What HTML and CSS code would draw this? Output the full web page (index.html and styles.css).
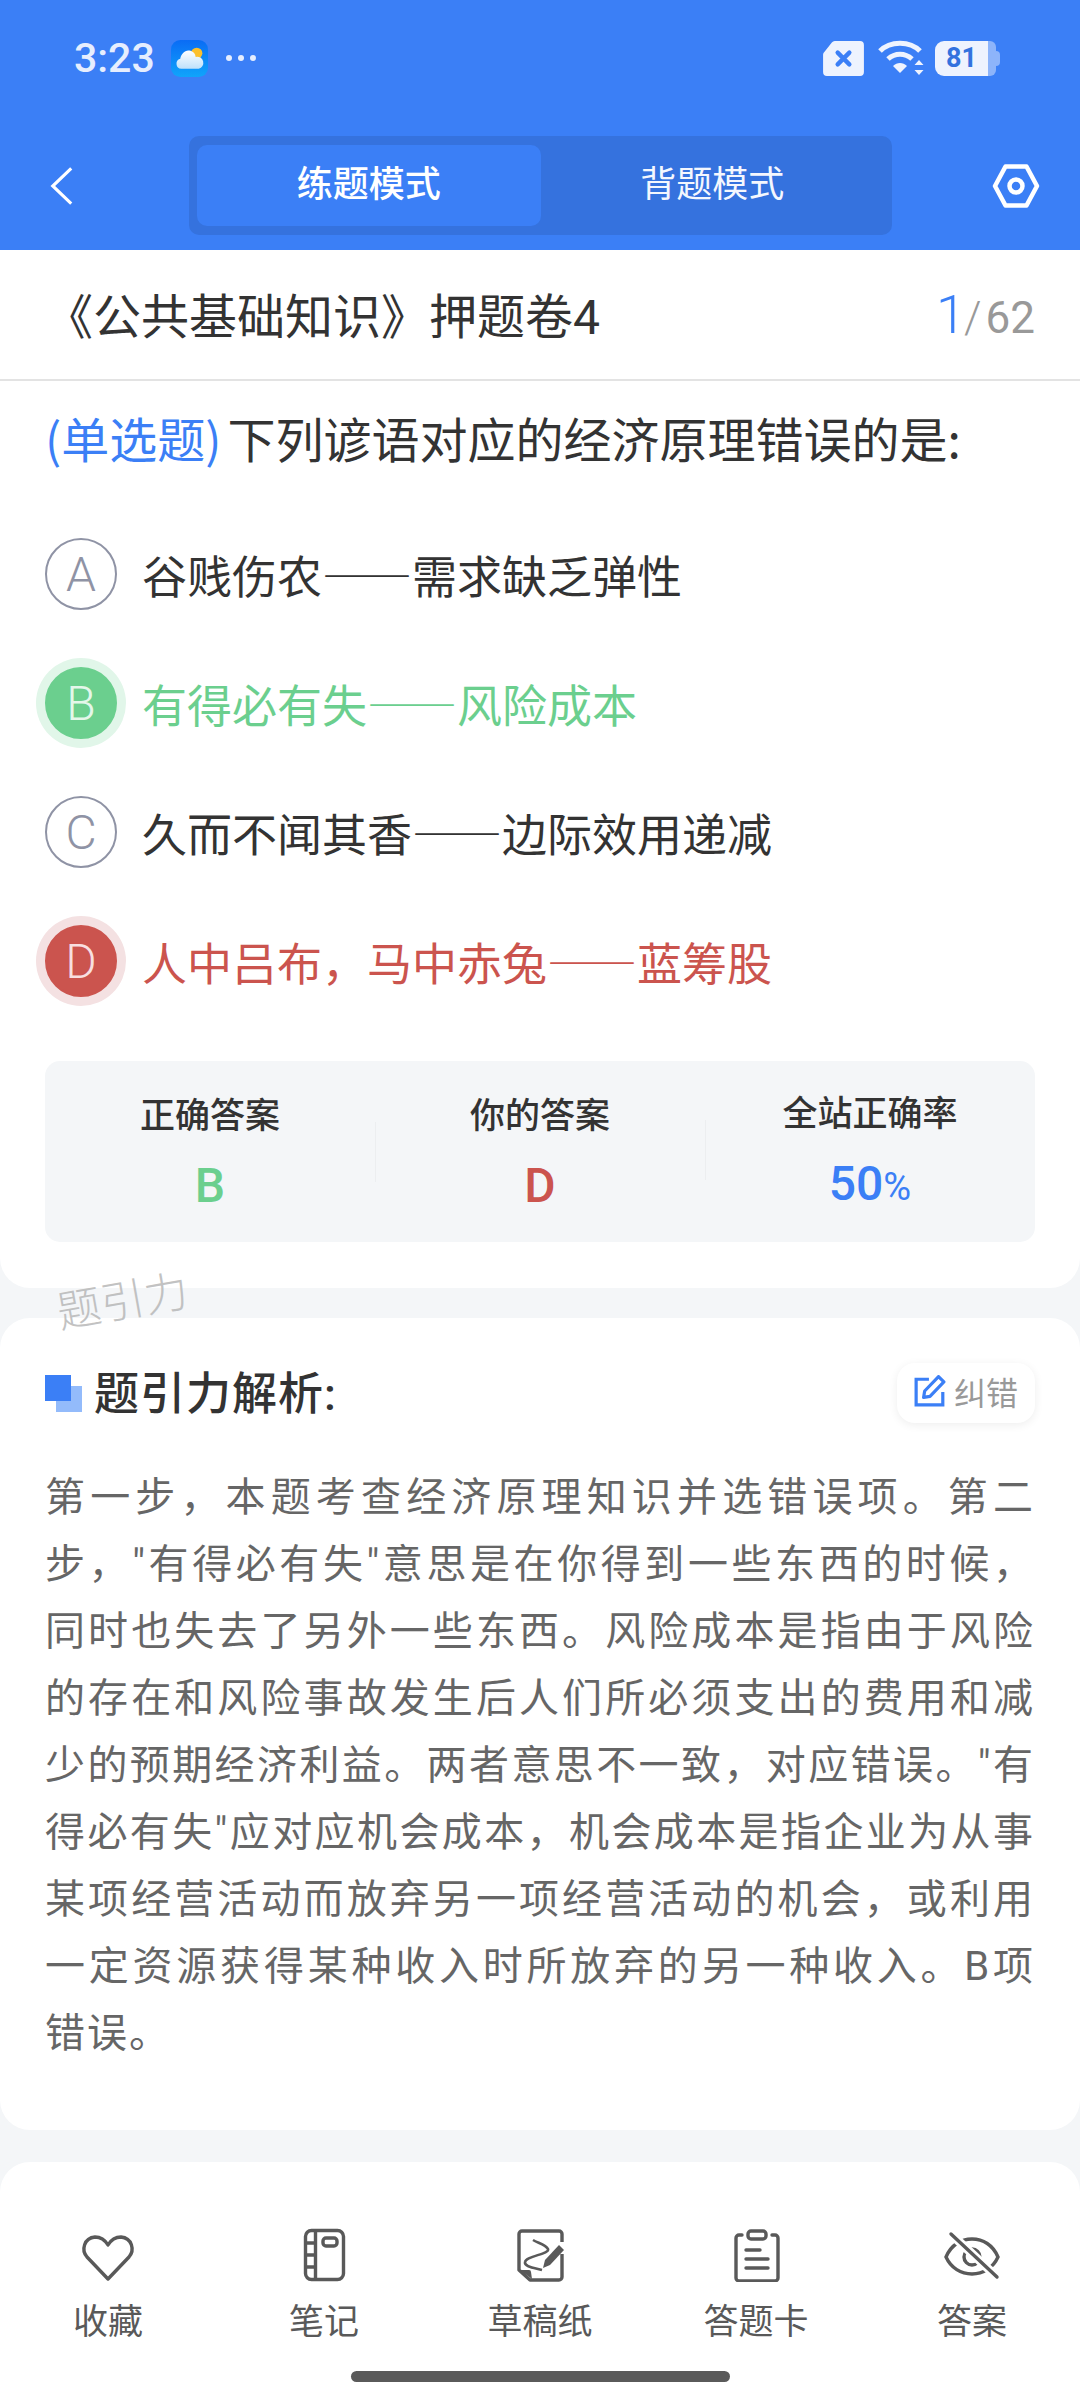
FILE: index.html
```html
<!DOCTYPE html>
<html lang="zh-CN">
<head>
  <meta charset="UTF-8" />
  <title>练题模式</title>
  <link rel="stylesheet" href="styles.css">
</head>
<body>
  <div class="app">
    <header class="top">
      <div class="status">
        <div class="status-left">
          <span class="time">3:23</span>
          <svg class="weather" viewBox="0 0 36 36"><defs><linearGradient id="wbg" x1="0" y1="0" x2="0" y2="1"><stop offset="0" stop-color="#0a6cf5"/><stop offset="1" stop-color="#10a4fb"/></linearGradient><linearGradient id="cl" x1="0" y1="0" x2="0" y2="1"><stop offset="0" stop-color="#fff"/><stop offset="1" stop-color="#bfe1fb"/></linearGradient></defs><rect width="36" height="36" rx="9" fill="url(#wbg)"/><circle cx="25" cy="13" r="5.5" fill="#fbc02d"/><path d="M10 28a5 5 0 0 1-1-9.8C10 13 14 9 19 10.500a7 7 0 0 1 5 6 5.500 5.500 0 0 1 3 11.500z" fill="url(#cl)"/></svg>
          <span class="dots"><i></i><i></i><i></i></span>
        </div>
        <div class="status-right">
          <svg class="sim" viewBox="0 0 42 36"><path d="M12 0h26a4 4 0 0 1 4 4v28a4 4 0 0 1-4 4H4a4 4 0 0 1-4-4V14a4 4 0 0 1 1.500-3L9 1.500A4 4 0 0 1 12 0z" fill="#eef3fe"/><path d="M15 12l12 12M27 12L15 24" stroke="#3b7ff6" stroke-width="4.500" stroke-linecap="round"/></svg>
          <svg class="wifi" viewBox="0 0 46 36"><path d="M2 11C12 .5 32 .5 42 11" fill="none" stroke="#eef3fe" stroke-width="5"/><path d="M10 19c7-6.500 17-6.500 24 0" fill="none" stroke="#eef3fe" stroke-width="5"/><path d="M15 26c4-4 10-4 14 0l-7 7z" fill="#eef3fe"/><path d="M41 20l4.500 5h-9zM41 35l4.500-5h-9z" fill="#eef3fe"/></svg>
          <div class="battery"><span class="battery-level">81</span><span class="battery-rest"></span></div>
        </div>
      </div>
      <div class="nav">
        <svg class="back" viewBox="0 0 26 44"><path d="M23 3L3 22l20 19" fill="none" stroke="#fff" stroke-width="3.400"/></svg>
        <div class="tabs">
          <div class="tab active">练题模式</div>
          <div class="tab">背题模式</div>
        </div>
        <svg class="settings" viewBox="0 0 48 44"><path d="M13.500 2.500h21L45 22 34.500 41.500h-21L3 22z" fill="none" stroke="#fff" stroke-width="4.500" stroke-linejoin="round"/><circle cx="24" cy="22" r="6.500" fill="none" stroke="#fff" stroke-width="4.500"/></svg>
      </div>
    </header>

    <div class="paper">
      <div class="paper-title">《公共基础知识》押题卷4</div>
      <div class="paper-count"><span class="current">1</span><span class="slash">/</span><span>62</span></div>
    </div>

    <section class="card question">
      <p class="stem"><span class="kind">(单选题)</span>下列谚语对应的经济原理错误的是:</p>
      <ul class="options">
        <li class="option"><span class="letter">A</span><span>谷贱伤农——需求缺乏弹性</span></li>
        <li class="option right"><span class="letter">B</span><span>有得必有失——风险成本</span></li>
        <li class="option"><span class="letter">C</span><span>久而不闻其香——边际效用递减</span></li>
        <li class="option wrong"><span class="letter">D</span><span>人中吕布，马中赤兔——蓝筹股</span></li>
      </ul>
      <div class="stats">
        <div class="stat"><h4>正确答案</h4><p class="green">B</p></div>
        <div class="stat"><h4>你的答案</h4><p class="red">D</p></div>
        <div class="stat"><h4>全站正确率</h4><p class="blue">50<small>%</small></p></div>
      </div>
    </section>

    <div class="watermark">题引力</div>

    <section class="card analysis">
      <div class="analysis-head">
        <div class="analysis-title">
          <span class="squares"><i></i><i></i></span>
          <h3>题引力解析:</h3>
        </div>
        <div class="fix">
          <svg viewBox="0 0 30 30"><path d="M14 4H2v24h25V16" fill="none" stroke="#3b7ff6" stroke-width="3"/><path d="M23 1.500l5 5L15 20l-6 1 1-6z" fill="none" stroke="#3b7ff6" stroke-width="3" stroke-linejoin="round"/></svg>
          <span>纠错</span>
        </div>
      </div>
      <p class="analysis-text">第一步，本题考查经济原理知识并选错误项。第二步，"有得必有失"意思是在你得到一些东西的时候，同时也失去了另外一些东西。风险成本是指由于风险的存在和风险事故发生后人们所必须支出的费用和减少的预期经济利益。两者意思不一致，对应错误。"有得必有失"应对应机会成本，机会成本是指企业为从事某项经营活动而放弃另一项经营活动的机会，或利用一定资源获得某种收入时所放弃的另一种收入。B项错误。</p>
    </section>

    <nav class="bottom">
      <div class="action">
        <svg viewBox="0 0 56 56"><path d="M28 53L7 31C1 24 4 12 15 11c6 0 10 3 13 8 3-5 7-8 13-8 11 1 14 13 8 20z" fill="none" stroke="#595959" stroke-width="3.400" stroke-linejoin="round"/></svg>
        <span>收藏</span>
      </div>
      <div class="action">
        <svg viewBox="0 0 56 56"><rect x="9.500" y="4.500" width="38" height="49" rx="6" fill="none" stroke="#595959" stroke-width="3.400"/><path d="M19.500 4.500v49M9.500 17h10M9.500 29h10M9.500 41h10" fill="none" stroke="#595959" stroke-width="3.400"/><rect x="27" y="12" width="14" height="8" rx="3" fill="none" stroke="#595959" stroke-width="3.400"/></svg>
        <span>笔记</span>
      </div>
      <div class="action">
        <svg viewBox="0 0 56 56"><path d="M50 16V8a3 3 0 0 0-3-3H10a3 3 0 0 0-3 3v36l11 10h29a3 3 0 0 0 3-3V28" fill="none" stroke="#595959" stroke-width="3.400" stroke-linejoin="round"/><path d="M8 44h9a2 2 0 0 1 2 2l1 7z" fill="#595959"/><path d="M21 14c5 3 13 5 15 9 2 5-22 7-23 13-1 5 10 6 17 8" fill="none" stroke="#595959" stroke-width="2.600"/><path d="M47 19l5 5-14 15-7 3 2-8z" fill="#595959"/></svg>
        <span>草稿纸</span>
      </div>
      <div class="action">
        <svg viewBox="0 0 56 56"><path d="M14 9h-3a3 3 0 0 0-3 3v40a3 3 0 0 0 3 3h36a3 3 0 0 0 3-3V12a3 3 0 0 0-3-3h-3" fill="none" stroke="#595959" stroke-width="3.400" stroke-linecap="round"/><rect x="20" y="5" width="18" height="8" rx="3" fill="none" stroke="#595959" stroke-width="3.400"/><path d="M18 24h14M18 33h22M18 42h22" stroke="#595959" stroke-width="3.400" stroke-linecap="round"/></svg>
        <span>答题卡</span>
      </div>
      <div class="action">
        <svg viewBox="0 0 56 56"><path d="M2 31C7 19 17 13 28 13c11 0 21 6 26 18-5 11-15 17-26 17S7 42 2 31z" fill="none" stroke="#595959" stroke-width="3.400"/><circle cx="28" cy="31" r="8" fill="none" stroke="#595959" stroke-width="3.400"/><path d="M7 8l46 43" stroke="#fff" stroke-width="9"/><path d="M7 8l46 43" stroke="#595959" stroke-width="3.400" stroke-linecap="round"/></svg>
        <span>答案</span>
      </div>
    </nav>
    <div class="home-bar"></div>
  </div>
</body>
</html>
```

FILE: styles.css
```css
* {
  box-sizing: border-box;
  margin: 0;
  padding: 0;
}

body {
  font-family: Roboto, "Noto Sans CJK SC", sans-serif;
  background: #f4f6f8;
  color: #333;
}

.app {
  position: relative;
  width: 1080px;
  height: 2400px;
  overflow: hidden;
  background: #f4f6f8;
}

/* top blue area */
.top {
  height: 250px;
  background: #3b7ff6;
}

.status {
  height: 136px;
  padding: 38px 84px 0 74px;
  display: flex;
  justify-content: space-between;
  align-items: flex-start;
}

.status-left,
.status-right {
  display: flex;
  align-items: center;
  height: 40px;
}

.time {
  font-size: 41px;
  font-weight: 500;
  color: #e6eefe;
  width: 97px;
}

.weather {
  width: 37px;
  height: 37px;
}

.dots {
  display: flex;
  gap: 6px;
  margin-left: 18px;
}

.dots i {
  width: 6px;
  height: 6px;
  border-radius: 50%;
  background: #e6eefe;
}

.sim {
  width: 43px;
  height: 35px;
}

.wifi {
  width: 48px;
  height: 36px;
  margin-left: 12px;
}

.battery {
  display: flex;
  align-items: center;
  height: 35px;
  margin-left: 10px;
}

.battery-level {
  width: 53px;
  background: #eef3fe;
  color: #3372de;
  border-radius: 9px 0 0 9px;
  font-size: 27px;
  font-weight: 700;
  line-height: 35px;
  text-align: center;
}

.battery-rest {
  position: relative;
  width: 8px;
  height: 35px;
  background: #8db4fa;
  border-radius: 0 6px 6px 0;
}

.battery-rest::after {
  content: "";
  position: absolute;
  left: 8px;
  top: 10px;
  width: 4px;
  height: 15px;
  background: #8db4fa;
  border-radius: 0 4px 4px 0;
}

.nav {
  height: 114px;
  padding: 0 24px 15px 50px;
  display: flex;
  align-items: center;
}

.back {
  width: 24px;
  height: 44px;
}

.tabs {
  width: 703px;
  height: 99px;
  margin-left: 115px;
  padding: 9px 8px;
  display: flex;
  background: #3572de;
  border-radius: 10px;
}

.tab {
  flex: 1;
  color: #f4f7fe;
  font-size: 36px;
  line-height: 81px;
  text-align: center;
  border-radius: 10px;
}

.tab.active {
  background: #3b7ff6;
  font-weight: 500;
  color: #fff;
}

.settings {
  width: 48px;
  height: 44px;
  margin-left: 100px;
}

/* paper title row */
.paper {
  height: 131px;
  padding: 0 45px;
  background: #fff;
  border-bottom: 2px solid #e3e3e3;
  display: flex;
  justify-content: space-between;
  align-items: center;
}

.paper-title {
  font-size: 48px;
  color: #333;
  margin-bottom: 3px;
}

.paper-count {
  display: flex;
  align-items: baseline;
  color: #999;
  font-size: 44px;
}

.current {
  color: #3b7ff6;
  font-size: 54px;
  font-weight: 300;
}

.slash {
  margin: 0 4px 0 -2px;
  font-weight: 300;
}

.card {
  background: #fff;
  border-radius: 30px;
}

/* question */
.question {
  height: 907px;
  padding: 23px 45px 0;
  border-radius: 0 0 30px 30px;
}

.stem {
  font-family: "Noto Sans CJK SC", sans-serif;
  font-size: 48px;
  line-height: 66px;
}

.kind {
  color: #3b7ff6;
  margin-right: 6px;
}

.options {
  list-style: none;
  margin-top: 68px;
}

.option {
  height: 72px;
  margin-bottom: 57px;
  display: flex;
  align-items: center;
  gap: 25px;
  font-family: "Noto Sans CJK SC", sans-serif;
  font-size: 45px;
}

.letter {
  width: 72px;
  height: 72px;
  border: 2px solid #8f93a5;
  border-radius: 50%;
  color: #8f93a5;
  font-family: Roboto, sans-serif;
  font-size: 48px;
  font-weight: 300;
  display: flex;
  align-items: center;
  justify-content: center;
  flex-shrink: 0;
}

.option.right {
  color: #6bcf8e;
}

.option.right .letter {
  background: #6bcf8e;
  border-color: #6bcf8e;
  color: #e4f7ea;
  box-shadow: 0 0 0 9px #e1f6e9;
}

.option.wrong {
  color: #cb544e;
}

.option.wrong .letter {
  background: #cb544e;
  border-color: #cb544e;
  color: #f8dfe0;
  box-shadow: 0 0 0 9px #f4e1e2;
}

.stats {
  height: 181px;
  margin-top: 64px;
  background: #f4f6f8;
  border-radius: 15px;
  display: flex;
  align-items: center;
}

.stat {
  flex: 1;
  text-align: center;
  position: relative;
}

.stat + .stat::before {
  content: "";
  position: absolute;
  left: 0;
  top: 30px;
  height: 60px;
  border-left: 1px solid #eceef0;
}

.stat h4 {
  font-size: 35px;
  font-weight: 500;
  line-height: 50px;
  color: #333;
}

.stat p {
  font-size: 48px;
  font-weight: 500;
  line-height: 52px;
  margin-top: 18px;
}

.stat small {
  font-size: 38px;
  font-weight: 400;
}

.green {
  color: #6bcf8e;
}

.red {
  color: #cb544e;
}

.blue {
  color: #3b7ff6;
}

.watermark {
  position: absolute;
  left: 56px;
  top: 1266px;
  font-size: 44px;
  font-weight: 300;
  color: #b8b8b8;
  transform: rotate(-10deg);
  z-index: 2;
  opacity: .85;
}

/* analysis */
.analysis {
  height: 812px;
  margin-top: 30px;
  padding: 45px 45px 0;
}

.analysis-head {
  display: flex;
  justify-content: space-between;
  align-items: center;
  height: 60px;
}

.analysis-title {
  display: flex;
  align-items: center;
  gap: 12px;
}

.squares {
  position: relative;
  width: 37px;
  height: 37px;
}

.squares i {
  position: absolute;
  width: 26px;
  height: 26px;
}

.squares i:first-child {
  left: 11px;
  top: 11px;
  background: #93bbfb;
}

.squares i:last-child {
  left: 0;
  top: 0;
  background: #3b7ff6;
}

.analysis-title h3 {
  font-size: 45px;
  font-weight: 500;
  letter-spacing: 1px;
  padding-bottom: 6px;
  color: #333;
}

.fix {
  width: 138px;
  height: 60px;
  padding-bottom: 4px;
  background: #fff;
  border-radius: 18px;
  box-shadow: 0 2px 10px rgba(0, 0, 0, .07);
  display: flex;
  align-items: center;
  justify-content: center;
  gap: 8px;
  color: #999;
  font-size: 32px;
}

.fix svg {
  width: 32px;
  height: 32px;
}

.analysis-text {
  margin-top: 41px;
  font-size: 40px;
  line-height: 67px;
  letter-spacing: 2px;
  text-align: justify;
  color: #666;
}

/* bottom toolbar */
.bottom {
  height: 238px;
  margin-top: 32px;
  padding-top: 64px;
  background: #fff;
  border-radius: 30px 30px 0 0;
  display: flex;
}

.action {
  flex: 1;
  display: flex;
  flex-direction: column;
  align-items: center;
  color: #595959;
  font-size: 35px;
}

.action svg {
  width: 56px;
  height: 56px;
}

.action span {
  margin-top: 11px;
}

.home-bar {
  position: absolute;
  left: 351px;
  bottom: 18px;
  width: 379px;
  height: 11px;
  background: #5a5a5a;
  border-radius: 6px;
}
```
